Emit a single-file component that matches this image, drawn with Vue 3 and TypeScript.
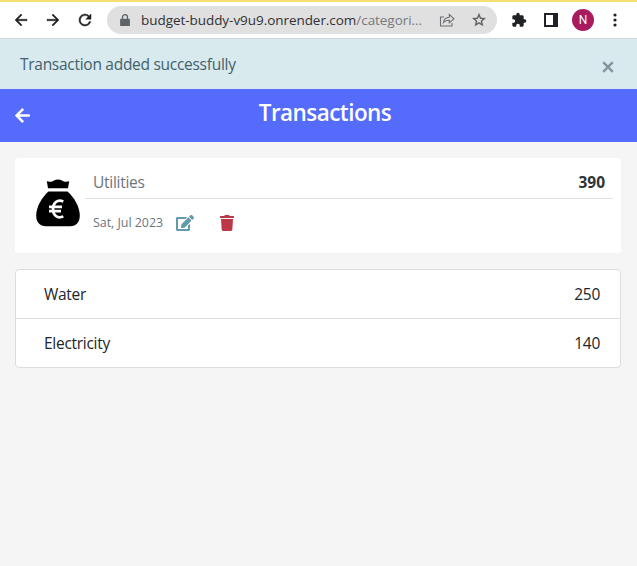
<script setup lang="ts">
interface Item {
  name: string
  amount: number
}

const items: Item[] = [
  { name: 'Water', amount: 250 },
  { name: 'Electricity', amount: 140 },
]
const total: number = items.reduce((sum, item) => sum + item.amount, 0)
</script>

<template>
  <div class="page">
    <div class="browser">
      <svg class="nav-icon" viewBox="0 0 24 24"><path d="M20 11H7.83l5.59-5.59L12 4l-8 8 8 8 1.41-1.41L7.83 13H20v-2z" /></svg>
      <svg class="nav-icon" viewBox="0 0 24 24"><path d="M12 4l-1.41 1.41L16.17 11H4v2h12.17l-5.58 5.59L12 20l8-8z" /></svg>
      <svg class="nav-icon" viewBox="0 0 24 24"><path d="M17.65 6.35A7.96 7.96 0 0 0 12 4a8 8 0 1 0 7.73 10h-2.08A6 6 0 1 1 12 6c1.66 0 3.14.69 4.22 1.78L13 11h7V4l-2.35 2.35z" /></svg>
      <div class="address">
        <svg class="lock" viewBox="0 0 10 13"><path d="M1 4.8h8a.9.9 0 0 1 .9.9v5.5a.9.9 0 0 1-.9.9H1a.9.9 0 0 1-.9-.9V5.7a.9.9 0 0 1 .9-.9z" /><path class="shackle" d="M2.5 5V3.2a2.5 2.5 0 0 1 5 0V5" /></svg>
        <span class="url">budget-buddy-v9u9.onrender.com<span class="path">/categori...</span></span>
        <svg class="share" viewBox="0 0 16 16"><path d="M5 5H1.500v9h11.500v-3M4.500 10.500C5 7 7 5.500 10.300 5.300V2.500L15 6.700l-4.700 4.100V8.200C8 8.100 6 8.800 4.500 10.500z" /></svg>
        <svg class="star" viewBox="0 0 24 24"><path d="M22 9.240l-7.190-.62L12 2 9.190 8.630 2 9.240l5.460 4.730L5.820 21 12 17.270 18.180 21l-1.630-7.030L22 9.240zM12 15.400l-3.760 2.270 1-4.280-3.320-2.880 4.380-.38L12 6.100l1.710 4.040 4.380.38-3.320 2.880 1 4.280L12 15.400z" /></svg>
      </div>
      <svg class="puzzle" viewBox="0 0 24 24"><path d="M20.500 11H19V7c0-1.100-.9-2-2-2h-4V3.500a2.500 2.500 0 0 0-5 0V5H4c-1.100 0-1.990.9-1.990 2v3.800H3.500c1.490 0 2.700 1.210 2.700 2.700s-1.210 2.700-2.700 2.700H2V20c0 1.100.9 2 2 2h3.800v-1.500c0-1.490 1.210-2.700 2.700-2.700s2.700 1.210 2.700 2.700V22H17c1.100 0 2-.9 2-2v-4h1.500a2.500 2.500 0 0 0 0-5z" /></svg>
      <svg class="panel" viewBox="0 0 14 14"><path fill-rule="evenodd" d="M0 0h14v14H0zM2 2v10h7V2z" /></svg>
      <span class="avatar">N</span>
      <svg class="menu" viewBox="0 0 4 14"><circle cx="2" cy="2" r="1.6" /><circle cx="2" cy="7" r="1.6" /><circle cx="2" cy="12" r="1.6" /></svg>
    </div>

    <div class="alert">
      <span class="message">Transaction added successfully</span>
      <svg class="close" viewBox="0 0 12 12"><path d="M1.200 1.200l9.600 9.600M10.800 1.200L1.200 10.800" /></svg>
    </div>

    <header class="header">
      <svg class="back" viewBox="0 0 448 512"><path d="M257.500 445.100l-22.200 22.200c-9.400 9.400-24.600 9.400-33.900 0L7 273c-9.400-9.400-9.400-24.600 0-33.900L201.400 44.700c9.400-9.400 24.600-9.400 33.900 0l22.200 22.200c9.500 9.500 9.300 25-.4 34.300L136.600 216H424c13.300 0 24 10.700 24 24v32c0 13.300-10.700 24-24 24H136.600l120.500 114.800c9.800 9.300 10 24.800.4 34.300z" /></svg>
      <h1 class="title">Transactions</h1>
    </header>

    <main class="content">
      <section class="card">
        <svg class="bag" viewBox="0 0 44 48">
          <path d="M10.800 2.300c3 .8 5.700.4 7.200-.8 2.300-1.500 5.700-1.500 8 0 1.500 1.200 4.200 1.600 7.200.8l-1.200 7H12z" />
          <path d="M12.500 12.500h19C38 18 43.800 28 43.800 36.500 43.800 43 40.500 47.200 34 47.200H10C3.500 47.200.2 43 .2 36.500.2 28 6 18 12.500 12.500z" />
          <path class="euro" d="M27.300 22.600c-6-2.700-10.300 1.400-10.300 7.400s4.300 10.200 10.300 7.400M13 27.800h13M13 32.100h12" />
        </svg>
        <div class="details">
          <div class="summary"><span class="category">Utilities</span><strong class="total">{{ total }}</strong></div>
          <div class="meta">
            <span class="date">Sat, Jul 2023</span>
            <svg class="edit" viewBox="0 0 576 512"><path d="M402.600 83.200l90.200 90.200c3.800 3.800 3.800 10 0 13.800L274.400 405.600l-92.800 10.300c-12.400 1.400-22.900-9.100-21.500-21.500l10.300-92.800L388.800 83.200c3.800-3.800 10-3.800 13.800 0zm162-22.900l-48.800-48.800c-15.200-15.200-39.900-15.200-55.200 0l-35.400 35.400c-3.800 3.800-3.800 10 0 13.800l90.200 90.200c3.800 3.800 10 3.800 13.800 0l35.400-35.400c15.200-15.300 15.200-40 0-55.200zM384 346.200V448H64V128h229.800c3.200 0 6.200-1.300 8.500-3.500l40-40c7.600-7.600 2.200-20.500-8.500-20.500H48C21.500 64 0 85.500 0 112v352c0 26.500 21.500 48 48 48h352c26.500 0 48-21.500 48-48V306.200c0-10.700-12.900-16-20.500-8.500l-40 40c-2.200 2.300-3.500 5.300-3.500 8.500z" /></svg>
            <svg class="trash" viewBox="0 0 448 512"><path d="M432 32H312l-9.400-18.700A24 24 0 0 0 281.100 0H166.800a23.720 23.720 0 0 0-21.400 13.300L136 32H16A16 16 0 0 0 0 48v32a16 16 0 0 0 16 16h416a16 16 0 0 0 16-16V48a16 16 0 0 0-16-16zM53.200 467a48 48 0 0 0 47.900 45h245.800a48 48 0 0 0 47.900-45L416 128H32z" /></svg>
          </div>
        </div>
      </section>

      <ul class="list">
        <li v-for="item in items" :key="item.name" class="row">
          <span>{{ item.name }}</span><span class="amount">{{ item.amount }}</span>
        </li>
      </ul>
    </main>
  </div>
</template>

<style>
body {
  margin: 0;
  background: #f5f5f5;
}
</style>

<style scoped>
.page {
  height: 566px;
  overflow: hidden;
  background: #f5f5f5;
  color: #212529;
  font: 15.5px/24px "Open Sans", "Noto Sans", sans-serif;
  letter-spacing: -0.28px;
}
svg {
  display: block;
  flex: none;
}
.browser {
  box-sizing: border-box;
  height: 39px;
  display: flex;
  align-items: center;
  padding-left: 12px;
  border-top: 2px solid #f6df71;
  border-bottom: 1px solid #cbd8dc;
  background: #fff;
}
.nav-icon {
  width: 18px;
  height: 18px;
  margin-right: 14px;
  fill: #202124;
  stroke: #202124;
  stroke-width: 0.6;
}
.address {
  box-sizing: border-box;
  width: 390px;
  height: 28px;
  margin-left: -1px;
  display: flex;
  align-items: center;
  padding-left: 13px;
  border-radius: 14px;
  background: #e0e0e1;
}
.lock {
  width: 10px;
  height: 13px;
  fill: #5f6368;
}
.shackle {
  fill: none;
  stroke: #5f6368;
  stroke-width: 1.3;
}
.url {
  width: 299px;
  margin-left: 11px;
  font-size: 13.5px;
  letter-spacing: -0.05px;
  white-space: nowrap;
  color: #303134;
}
.path {
  color: #77797c;
}
.share {
  width: 16px;
  height: 16px;
  margin-left: -1px;
  fill: none;
  stroke: #6b6e72;
  stroke-width: 1.1;
}
.star {
  width: 16px;
  height: 16px;
  margin-left: 16px;
  fill: #55585c;
  stroke: #55585c;
  stroke-width: 0.4;
}
.puzzle {
  width: 16px;
  height: 16px;
  margin-left: 14px;
  fill: #202124;
}
.panel {
  width: 14px;
  height: 14px;
  margin-left: 17px;
  fill: #202124;
}
.avatar {
  width: 22px;
  height: 22px;
  margin-left: 14px;
  border-radius: 50%;
  background: #a91b5f;
  color: #fff;
  font: 12px/22px Roboto, sans-serif;
  text-align: center;
}
.menu {
  width: 4px;
  height: 14px;
  margin-left: 19px;
  fill: #202124;
}
.alert {
  box-sizing: border-box;
  height: 50px;
  display: flex;
  justify-content: space-between;
  padding: 13px 23px 0 20px;
  background: #d9eaef;
  color: #42616a;
}
.close {
  width: 12px;
  height: 12px;
  margin-top: 9px;
  fill: none;
  stroke: #84969c;
  stroke-width: 2.4;
}
.header {
  height: 53px;
  display: grid;
  grid-template-columns: 1fr auto 1fr;
  align-items: center;
  padding: 0 2px 0 15px;
  background: #546bfb;
}
.back {
  width: 15px;
  height: 17px;
  fill: #fff;
}
.title {
  margin: 0 0 6px;
  color: #fff;
  font-size: 22.5px;
  line-height: 28px;
  font-weight: 650;
  letter-spacing: -0.55px;
}
.content {
  padding: 16px 16px 0 15px;
}
.card {
  box-sizing: border-box;
  height: 95px;
  display: flex;
  padding: 0 8px 0 21px;
  border-radius: 3px;
  background: #fff;
}
.bag {
  width: 44px;
  height: 48px;
  margin-top: 21px;
}
.euro {
  fill: none;
  stroke: #fff;
  stroke-width: 2.7;
}
.details {
  flex: 1;
  margin-left: 5px;
}
.summary {
  box-sizing: border-box;
  height: 41px;
  display: flex;
  justify-content: space-between;
  padding: 12px 8px 0;
  border-bottom: 1px solid #dfe0e2;
}
.category {
  color: #6c757d;
}
.total {
  font-weight: 700;
  color: #303438;
  letter-spacing: 0;
}
.meta {
  height: 48px;
  display: flex;
  align-items: center;
  padding-left: 8px;
}
.date {
  width: 83px;
  font-size: 12.5px;
  letter-spacing: -0.05px;
  color: #6c757d;
  white-space: nowrap;
}
.edit {
  width: 18px;
  height: 16px;
  margin-top: -1px;
  fill: #619aad;
}
.trash {
  width: 14px;
  height: 16px;
  margin-top: -1px;
  margin-left: 26px;
  fill: #bd3847;
}
.list {
  margin: 16px 0 0;
  padding: 0;
  list-style: none;
  border: 1px solid #dcdddf;
  border-radius: 4px;
  background: #fff;
}
.row {
  height: 48px;
  display: flex;
  align-items: center;
  justify-content: space-between;
  padding: 0 20px 0 28px;
}
.row + .row {
  border-top: 1px solid #dcdddf;
}
</style>
